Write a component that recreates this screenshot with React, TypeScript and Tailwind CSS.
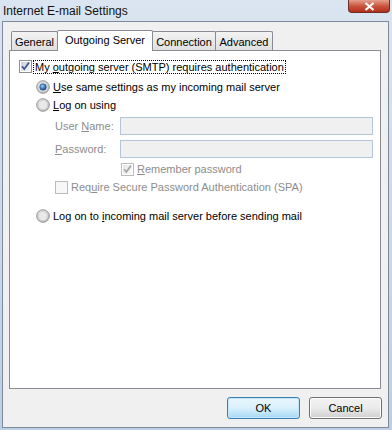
import React from 'react';

const Check = ({ disabled = false }: { disabled?: boolean }) => (
  <svg width="13" height="13" viewBox="0 0 13 13" className="shrink-0">
    <defs>
      <linearGradient id={disabled ? 'cbd' : 'cb'} x1="0" y1="0" x2="1" y2="1">
        <stop offset="0" stopColor={disabled ? '#e6e6e6' : '#cbcfd5'} />
        <stop offset="1" stopColor={disabled ? '#fafafa' : '#f6f6f6'} />
      </linearGradient>
    </defs>
    <rect x="0.5" y="0.5" width="12" height="12" fill="#fff" stroke={disabled ? '#bcbcbc' : '#8e8f8f'} />
    <rect x="2" y="2" width="9" height="9" fill={`url(#${disabled ? 'cbd' : 'cb'})`} />
    <path d="M3 6.2 L5.3 9 L10 2.6" fill="none" stroke={disabled ? '#a5a5a5' : '#3f5296'} strokeWidth="1.7" />
  </svg>
);

const Box = () => (
  <svg width="13" height="13" viewBox="0 0 13 13" className="shrink-0">
    <rect x="0.5" y="0.5" width="12" height="12" fill="#f7f7f7" stroke="#bcbcbc" />
  </svg>
);

const Radio = ({ on = false }: { on?: boolean }) => (
  <svg width="14" height="14" viewBox="0 0 14 14" className="shrink-0">
    <defs>
      <radialGradient id="rb" cx="0.4" cy="0.35" r="0.7">
        <stop offset="0" stopColor="#f4f4f4" />
        <stop offset="1" stopColor="#bdbdbd" />
      </radialGradient>
      <radialGradient id="rd" cx="0.4" cy="0.35" r="0.6">
        <stop offset="0" stopColor="#8fd3ff" />
        <stop offset="1" stopColor="#1b4f9b" />
      </radialGradient>
    </defs>
    <circle cx="7" cy="7" r="6.3" fill="url(#rb)" stroke="#8c8c8c" strokeWidth="0.9" />
    <circle cx="7" cy="7" r="4.6" fill="#e9e9e9" stroke="#c9c9c9" strokeWidth="0.6" />
    {on && <circle cx="7" cy="7" r="3.3" fill="url(#rd)" stroke="#1c3f78" strokeWidth="0.5" />}
  </svg>
);

const Tab = ({ label, active = false, w }: { label: string; active?: boolean; w: string }) =>
  active ? (
    <div className={`${w} h-[21px] -mb-px relative z-10 bg-white border border-b-0 border-[#898c95] rounded-t-[2px] flex items-start justify-center pt-[3px] -mx-[1px]`}>
      {label}
    </div>
  ) : (
    <div className={`${w} h-[19px] bg-gradient-to-b from-[#f3f3f3] to-[#e0e0e0] border border-b-0 border-[#898c95] rounded-t-[2px] flex items-start justify-center pt-[4px]`}>
      {label}
    </div>
  );

export default function App() {
  return (
    <div
      className="w-[392px] h-[430px] flex flex-col bg-gradient-to-b from-[#dae5f1] via-[#cbd9ea] to-[#bccfe6] text-[11px] leading-[13px] text-black"
      style={{ fontFamily: '"Liberation Sans", Arial, sans-serif' }}
    >
      {/* Title bar */}
      <div className="h-[21px] flex items-start justify-between shrink-0">
        <div className="pl-[3px] pt-[4px] text-[12px] leading-[14px] text-[#111]">Internet E-mail Settings</div>
        <div className="w-[42px] h-[13px] mr-[2px] rounded-b-[4px] border border-t-0 border-[#6b2f28] bg-gradient-to-b from-[#e3a08f] via-[#c9543d] to-[#b3301a] flex items-center justify-center">
          <svg width="11" height="9" viewBox="0 0 11 9">
            <path d="M1.5 1 L9.5 8 M9.5 1 L1.5 8" stroke="#fff" strokeWidth="2.2" />
          </svg>
        </div>
      </div>

      {/* Client area */}
      <div className="ml-[2px] w-[387px] h-[407px] border border-[#7d8a99] bg-[#f0f0f0] flex flex-col pl-[6px] pt-[7px]">
        <div className="flex items-end pl-[2px] h-[21px]">
          <Tab label="General" w="w-[47px]" />
          <Tab label="Outgoing Server" active w="w-[96px]" />
          <Tab label="Connection" w="w-[64px]" />
          <Tab label="Advanced" w="w-[58px] -ml-px" />
        </div>

        <div className="w-[372px] h-[339px] bg-white border border-[#898c95] flex flex-col">
          <div className="flex items-center mt-[9px] ml-[9px] h-[13px]">
            <Check />
            <span className="ml-[1px] px-[1px] border border-dotted border-black leading-[12px]">
              My <u>o</u>utgoing server (SMTP) requires authentication
            </span>
          </div>

          <div className="flex items-center mt-[7px] ml-[26px] gap-[3px] h-[14px]">
            <Radio on />
            <span>
              <u>U</u>se same settings as my incoming mail server
            </span>
          </div>

          <div className="flex items-center mt-[4px] ml-[26px] gap-[3px] h-[14px]">
            <Radio />
            <span>
              <u>L</u>og on using
            </span>
          </div>

          <div className="flex items-center mt-[5px] ml-[45px] text-[#8d8d8d] h-[18px]">
            <span className="w-[65px]">
              User <u>N</u>ame:
            </span>
            <div className="w-[253px] h-[18px] border border-[#b4c6dc] bg-[#f0f0f0]" />
          </div>

          <div className="flex items-center mt-[5px] ml-[45px] text-[#8d8d8d] h-[18px]">
            <span className="w-[65px]">
              <u>P</u>assword:
            </span>
            <div className="w-[253px] h-[18px] border border-[#b4c6dc] bg-[#f0f0f0]" />
          </div>

          <div className="flex items-center mt-[5px] ml-[111px] gap-[3px] text-[#8d8d8d] h-[13px]">
            <Check disabled />
            <span>
              <u>R</u>emember password
            </span>
          </div>

          <div className="flex items-center mt-[5px] ml-[45px] gap-[3px] text-[#8d8d8d] h-[13px]">
            <Box />
            <span>
              Req<u>u</u>ire Secure Password Authentication (SPA)
            </span>
          </div>

          <div className="flex items-center mt-[15px] ml-[26px] gap-[3px] h-[14px]">
            <Radio />
            <span>
              Log on to <u>i</u>ncoming mail server before sending mail
            </span>
          </div>
        </div>

        <div className="flex justify-end gap-[9px] mt-[8px] pr-[6px]">
          <button className="w-[73px] h-[22px] rounded-[3px] border border-[#3c7fb1] bg-gradient-to-b from-[#eaf6fd] via-[#d9f0fc] to-[#a7d9f5] shadow-[inset_0_0_0_1px_#bfe6fb]">
            OK
          </button>
          <button className="w-[73px] h-[22px] rounded-[3px] border border-[#707070] bg-gradient-to-b from-[#f2f2f2] via-[#ebebeb] to-[#cfcfcf] shadow-[inset_0_0_0_1px_#fcfcfc]">
            Cancel
          </button>
        </div>
      </div>
    </div>
  );
}
